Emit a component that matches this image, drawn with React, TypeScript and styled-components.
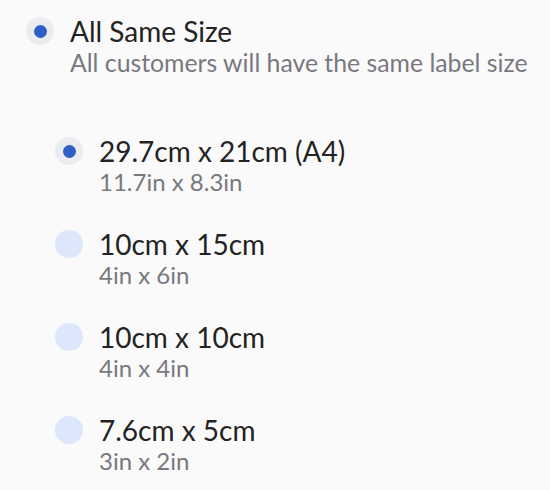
import React, { useState } from 'react'
import styled, { createGlobalStyle } from 'styled-components'

const GlobalStyle = createGlobalStyle`
  html, body {
    margin: 0;
    padding: 0;
    background: #fafafa;
    font-family: Lato, 'Noto Sans', sans-serif;
  }
`

interface Size {
  id: string
  metric: string
  imperial: string
}

const sizes: Size[] = [
  { id: 'a4', metric: '29.7cm x 21cm (A4)', imperial: '11.7in x 8.3in' },
  { id: '10x15', metric: '10cm x 15cm', imperial: '4in x 6in' },
  { id: '10x10', metric: '10cm x 10cm', imperial: '4in x 4in' },
  { id: '76x5', metric: '7.6cm x 5cm', imperial: '3in x 2in' },
]

const Page = styled.main`
  box-sizing: border-box;
  width: 550px;
  height: 490px;
  padding: 14px 0 0 26px;
  display: flex;
  flex-direction: column;
`

const Option = styled.label`
  display: flex;
  align-items: flex-start;
  gap: 16px;
  cursor: pointer;
`

const Radio = styled.span<{ checked: boolean }>`
  flex: none;
  width: 28px;
  height: 28px;
  margin-top: 3px;
  border-radius: 50%;
  display: flex;
  align-items: center;
  justify-content: center;
  background: ${({ checked }) => (checked ? '#ebecef' : '#dde7fb')};

  &::after {
    content: '';
    width: 13px;
    height: 13px;
    border-radius: 50%;
    background: #2f5fc6;
    display: ${({ checked }) => (checked ? 'block' : 'none')};
  }
`

const Texts = styled.span`
  display: flex;
  flex-direction: column;
`

const Title = styled.span`
  font-size: 28px;
  line-height: 34px;
  color: #232323;
`

const Hint = styled.span<{ large?: boolean }>`
  font-size: ${({ large }) => (large ? '24.8px' : '24px')};
  line-height: 28px;
  margin-top: ${({ large }) => (large ? '1px' : '0')};
  color: #78787e;
`

const SizeList = styled.div`
  display: flex;
  flex-direction: column;
  gap: 31px;
  margin: 57px 0 0 29px;
`

export default function App() {
  const [selected, setSelected] = useState('a4')

  return (
    <>
      <GlobalStyle />
      <Page>
        <Option>
          <Radio checked />
          <Texts>
            <Title>All Same Size</Title>
            <Hint large>All customers will have the same label size</Hint>
          </Texts>
        </Option>
        <SizeList>
          {sizes.map((size) => (
            <Option key={size.id} onClick={() => setSelected(size.id)}>
              <Radio checked={selected === size.id} />
              <Texts>
                <Title>{size.metric}</Title>
                <Hint>{size.imperial}</Hint>
              </Texts>
            </Option>
          ))}
        </SizeList>
      </Page>
    </>
  )
}
